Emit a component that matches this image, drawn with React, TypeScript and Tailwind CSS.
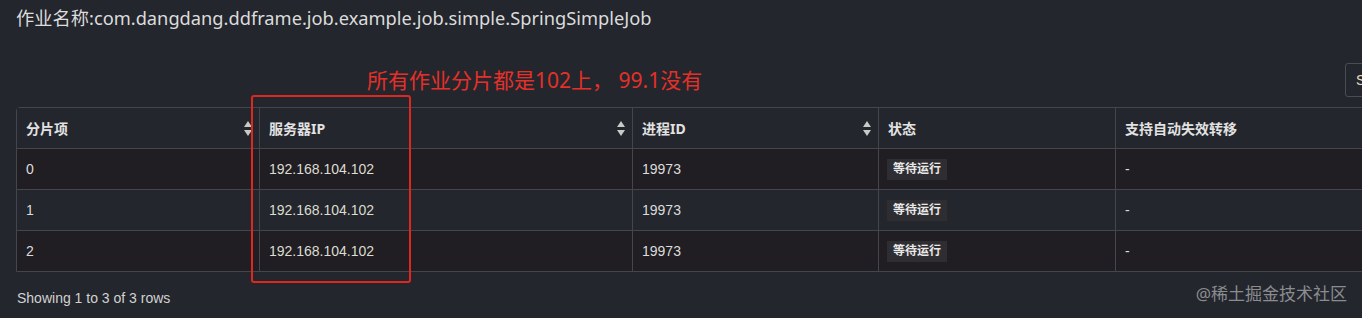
import React from "react";

const SortIcon = () => (
  <svg width="8" height="15" viewBox="0 0 8 15" className="shrink-0">
    <path d="M4 0 L8 6 L0 6 Z" fill="#c9c9c9" />
    <path d="M0 9 L8 9 L4 15 Z" fill="#c9c9c9" />
  </svg>
);

const cols = [
  { title: "分片项", sort: true },
  { title: "服务器IP", sort: true },
  { title: "进程ID", sort: true },
  { title: "状态", sort: false },
  { title: "支持自动失效转移", sort: false },
];

const rows = [
  { item: "0", ip: "192.168.104.102", pid: "19973" },
  { item: "1", ip: "192.168.104.102", pid: "19973" },
  { item: "2", ip: "192.168.104.102", pid: "19973" },
];

export default function App() {
  return (
    <div className="relative w-[1362px] h-[318px] overflow-hidden bg-[#23262c] font-['Liberation_Sans','Noto_Sans_CJK_SC',sans-serif]">
      <div className="w-[1390px] ml-[16px] flex flex-col">
        <div className="pt-[6px] text-[18.25px] leading-[24px] text-[#dcdcdc] whitespace-nowrap font-['Noto_Sans','Noto_Sans_CJK_SC',sans-serif]">
          作业名称:com.dangdang.ddframe.job.example.job.simple.SpringSimpleJob
        </div>
        <div className="mt-[33px] h-[34px] flex justify-end">
          <div className="w-[61px] h-[34px] border border-[#4a4d54] rounded-[3px] flex items-center pl-[10px] text-[14px] text-[#e8dcc0]">
            Search
          </div>
        </div>
        <div className="mt-[10px] border border-[#43464d] rounded-tl-[4px] grid grid-cols-[242px_373px_246px_237px_291px]">
          {cols.map((c, i) => (
            <div
              key={c.title}
              className={`h-[40px] flex items-center justify-between pl-[9px] pr-[7px] text-[14px] font-bold text-[#e2e2e2] bg-[#23262c] font-['Noto_Sans','Noto_Sans_CJK_SC',sans-serif] ${i > 0 ? "border-l border-[#43464d]" : ""}`}
            >
              <span>{c.title}</span>
              {c.sort && <SortIcon />}
            </div>
          ))}
          {rows.map((r, ri) => {
            const bg = ri % 2 === 0 ? "bg-[#201e22]" : "bg-[#23262c]";
            const cell = `h-[41px] flex items-center border-t border-[#43464d] ${bg}`;
            return (
              <React.Fragment key={ri}>
                <div className={`${cell} pl-[9px] text-[14px] text-[#dcdcdc]`}>{r.item}</div>
                <div className={`${cell} border-l pl-[9px] text-[14px] text-[#dcdcd0]`}>{r.ip}</div>
                <div className={`${cell} border-l pl-[9px] text-[14px] text-[#dcdcdc]`}>{r.pid}</div>
                <div className={`${cell} border-l pl-[8px]`}>
                  <span className="h-[21px] px-[6px] flex items-center bg-[#2e2d31] text-[12px] font-bold text-[#e8e8e8] font-['Noto_Sans','Noto_Sans_CJK_SC',sans-serif]">
                    等待运行
                  </span>
                </div>
                <div className={`${cell} border-l pl-[9px] text-[14px] text-[#dcdcdc]`}>-</div>
              </React.Fragment>
            );
          })}
        </div>
        <div className="mt-[17px] text-[14px] leading-[18px] text-[#d2d2d2] pl-[1px]">
          Showing 1 to 3 of 3 rows
        </div>
      </div>

      <div className="absolute left-[367px] top-[67px] text-[21px] leading-[26px] text-[#e5302a] whitespace-nowrap font-['Noto_Sans','Noto_Sans_CJK_SC',sans-serif]">
        所有作业分片都是102上， 99.1没有
      </div>
      <div className="absolute left-[251px] top-[95px] w-[160px] h-[188px] border-2 border-[#e0271f] rounded-[3px]" />
      <div className="absolute right-[15px] top-[283px] text-[17px] leading-[22px] text-[#8a8c90] whitespace-nowrap font-['Noto_Sans','Noto_Sans_CJK_SC',sans-serif]">
        @稀土掘金技术社区
      </div>
    </div>
  );
}
